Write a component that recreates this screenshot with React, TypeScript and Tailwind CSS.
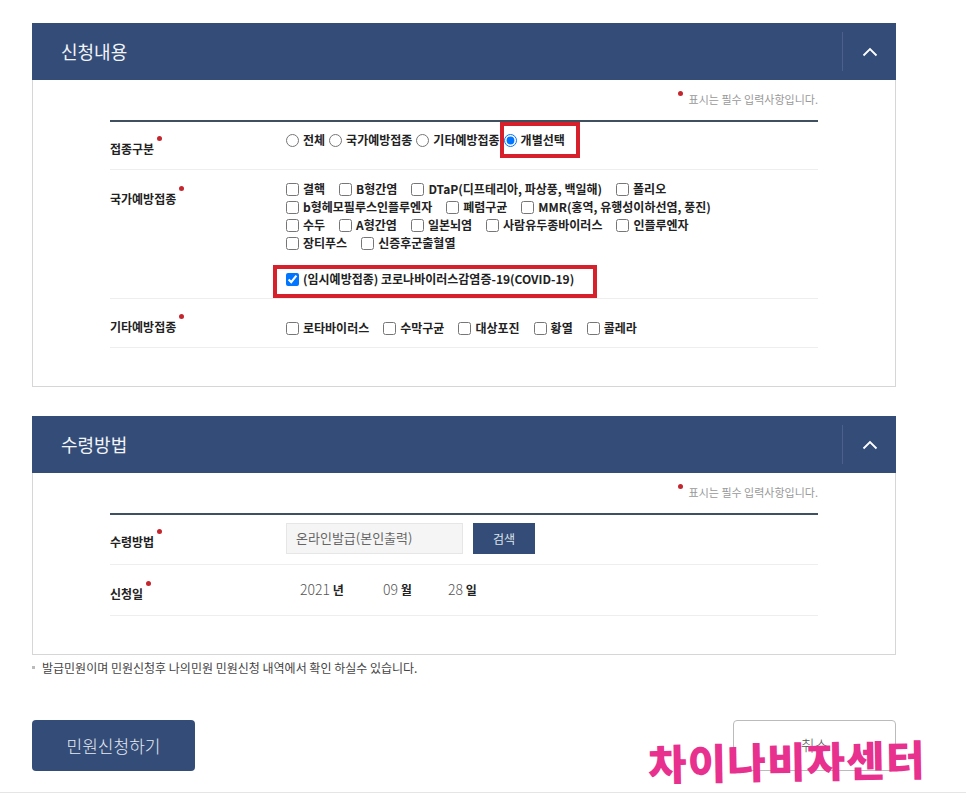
const font = { fontFamily: '"Noto Sans CJK KR", "Noto Sans", sans-serif' };

const nationalRows = [
  ["결핵", "B형간염", "DTaP(디프테리아, 파상풍, 백일해)", "폴리오"],
  ["b형헤모필루스인플루엔자", "폐렴구균", "MMR(홍역, 유행성이하선염, 풍진)"],
  ["수두", "A형간염", "일본뇌염", "사람유두종바이러스", "인플루엔자"],
  ["장티푸스", "신증후군출혈열"],
];
const otherItems = ["로타바이러스", "수막구균", "대상포진", "황열", "콜레라"];

function Dot() {
  return <span className="absolute -right-2 -top-[4px] w-[5px] h-[5px] rounded-full bg-[#c4262e]" />;
}

function Label({ text, pt }: { text: string; pt: string }) {
  return (
    <div className={`w-[176px] shrink-0 ${pt}`}>
      <span className="relative inline-block text-[12px] leading-[18px] font-bold text-[#222]">
        {text}
        <Dot />
      </span>
    </div>
  );
}

function Check({ text, checked }: { text: string; checked?: boolean }) {
  return (
    <label className="flex items-center mr-[14px] whitespace-nowrap">
      <input type="checkbox" defaultChecked={checked} className="m-0 mr-[4px] w-[13px] h-[13px]" />
      <span>{text}</span>
    </label>
  );
}

function Radio({ text, checked }: { text: string; checked?: boolean }) {
  return (
    <label className="flex items-center mr-[4px] whitespace-nowrap">
      <input type="radio" name="kind" defaultChecked={checked} className="m-0 mr-[4px] w-[13px] h-[13px]" />
      <span>{text}</span>
    </label>
  );
}

function Notice() {
  return (
    <div className="h-[40px] pt-[10px] flex justify-end text-[11px] leading-[18px] text-[#999]">
      <span className="relative">
        표시는 필수 입력사항입니다.
        <span className="absolute -left-[11px] top-[1px] w-[5px] h-[5px] rounded-full bg-[#c4262e]" />
      </span>
    </div>
  );
}

function Section({ title, children }: { title: string; children: React.ReactNode }) {
  return (
    <section className="w-[864px]">
      <div className="h-[57px] bg-[#344d78] flex items-center justify-between pl-[29px]">
        <h2 className="text-[18px] text-[#f2f4f8] font-normal">{title}</h2>
        <div className="w-[54px] h-[39px] border-l border-[#4a628b] flex items-center justify-center">
          <svg width="16" height="10" viewBox="0 0 16 10" fill="none" stroke="#fff" strokeWidth="1.8">
            <path d="M1.5 8.5 8 2l6.5 6.5" />
          </svg>
        </div>
      </div>
      <div className="border border-t-0 border-[#d6d6d6] pl-[77px] pr-[77px] pb-[38px]">
        <Notice />
        <div className="border-t-2 border-[#3f5060]">{children}</div>
      </div>
    </section>
  );
}

export default function App() {
  return (
    <div className="relative w-[966px] h-[799px] overflow-hidden bg-white pt-[23px]" style={font}>
      <div className="pl-[32px]">
        <Section title="신청내용">
          <div className="flex h-[48px] border-b border-[#eee]">
            <Label text="접종구분" pt="pt-[13px]" />
            <div className="flex pt-[9px] h-[27px] text-[12px] leading-[18px] font-semibold text-[#222]">
              <Radio text="전체" />
              <Radio text="국가예방접종" />
              <Radio text="기타예방접종" />
              <div className="relative">
                <Radio text="개별선택" checked />
                <span className="absolute -left-[4px] -top-[9px] w-[80px] h-[36px] border-4 border-[#d6202c]" />
              </div>
            </div>
          </div>
          <div className="flex h-[129px] border-b border-[#eee]">
            <Label text="국가예방접종" pt="pt-[15px]" />
            <div className="pt-[10px] text-[12px] leading-[18px] font-semibold text-[#222]">
              {nationalRows.map((row) => (
                <div key={row[0]} className="flex">
                  {row.map((item) => (
                    <Check key={item} text={item} />
                  ))}
                </div>
              ))}
              <div className="relative mt-[18px] flex">
                <Check text="(임시예방접종) 코로나바이러스감염증-19(COVID-19)" checked />
                <span className="absolute -left-[13px] -top-[5px] w-[324px] h-[33px] border-4 border-[#d6202c]" />
              </div>
            </div>
          </div>
          <div className="flex h-[49px] border-b border-[#eee]">
            <Label text="기타예방접종" pt="pt-[14px]" />
            <div className="flex pt-[10px] text-[12px] leading-[18px] font-semibold text-[#222]">
              {otherItems.map((item) => (
                <Check key={item} text={item} />
              ))}
            </div>
          </div>
        </Section>
      </div>

      <div className="pl-[32px] mt-[29px]">
        <Section title="수령방법">
          <div className="flex h-[50px] border-b border-[#eee]">
            <Label text="수령방법" pt="pt-[13px]" />
            <div className="flex pt-[8px] gap-[10px]">
              <div className="w-[177px] h-[31px] bg-[#f5f5f5] border border-[#e6e6e6] pl-[9px] text-[13px] leading-[28px] text-[#666]">
                온라인발급(본인출력)
              </div>
              <button className="w-[62px] h-[31px] bg-[#344d78] text-[12px] text-[#dfe4ec]">검색</button>
            </div>
          </div>
          <div className="flex h-[51px] border-b border-[#eee]">
            <Label text="신청일" pt="pt-[15px]" />
            <div className="flex pt-[15px] pl-[14px] text-[12px] leading-[18px] font-bold text-[#222]">
              <span className="w-[83px]">
                <span className="text-[14px] font-light text-[#555]">2021</span> 년
              </span>
              <span className="w-[65px]">
                <span className="text-[14px] font-light text-[#555]">09</span> 월
              </span>
              <span>
                <span className="text-[14px] font-light text-[#555]">28</span> 일
              </span>
            </div>
          </div>
        </Section>
      </div>

      <p className="relative mt-[4px] pl-[42px] text-[12px] leading-[18px] text-[#444]">
        <span className="absolute left-[32px] top-[7px] w-[3px] h-[3px] bg-[#bbb]" />
        발급민원이며 민원신청후 나의민원 민원신청 내역에서 확인 하실수 있습니다.
      </p>

      <div className="flex justify-between w-[864px] ml-[32px] mt-[43px]">
        <button className="w-[163px] h-[51px] rounded-[4px] bg-[#344d78] text-[17px] font-light text-[#e6eaf1]">
          민원신청하기
        </button>
        <button className="w-[163px] h-[51px] rounded-[4px] border border-[#bbb] bg-white text-[15px] font-light text-[#555]">
          취소
        </button>
      </div>

      <div className="mt-[21px] border-t border-[#e5e5e5]" />

      <div className="absolute left-[648px] top-[732px] text-[42px] leading-[56px] font-black tracking-[1px] whitespace-nowrap text-[#e8308f] -rotate-1">
        차이나비자센터
      </div>
    </div>
  );
}
